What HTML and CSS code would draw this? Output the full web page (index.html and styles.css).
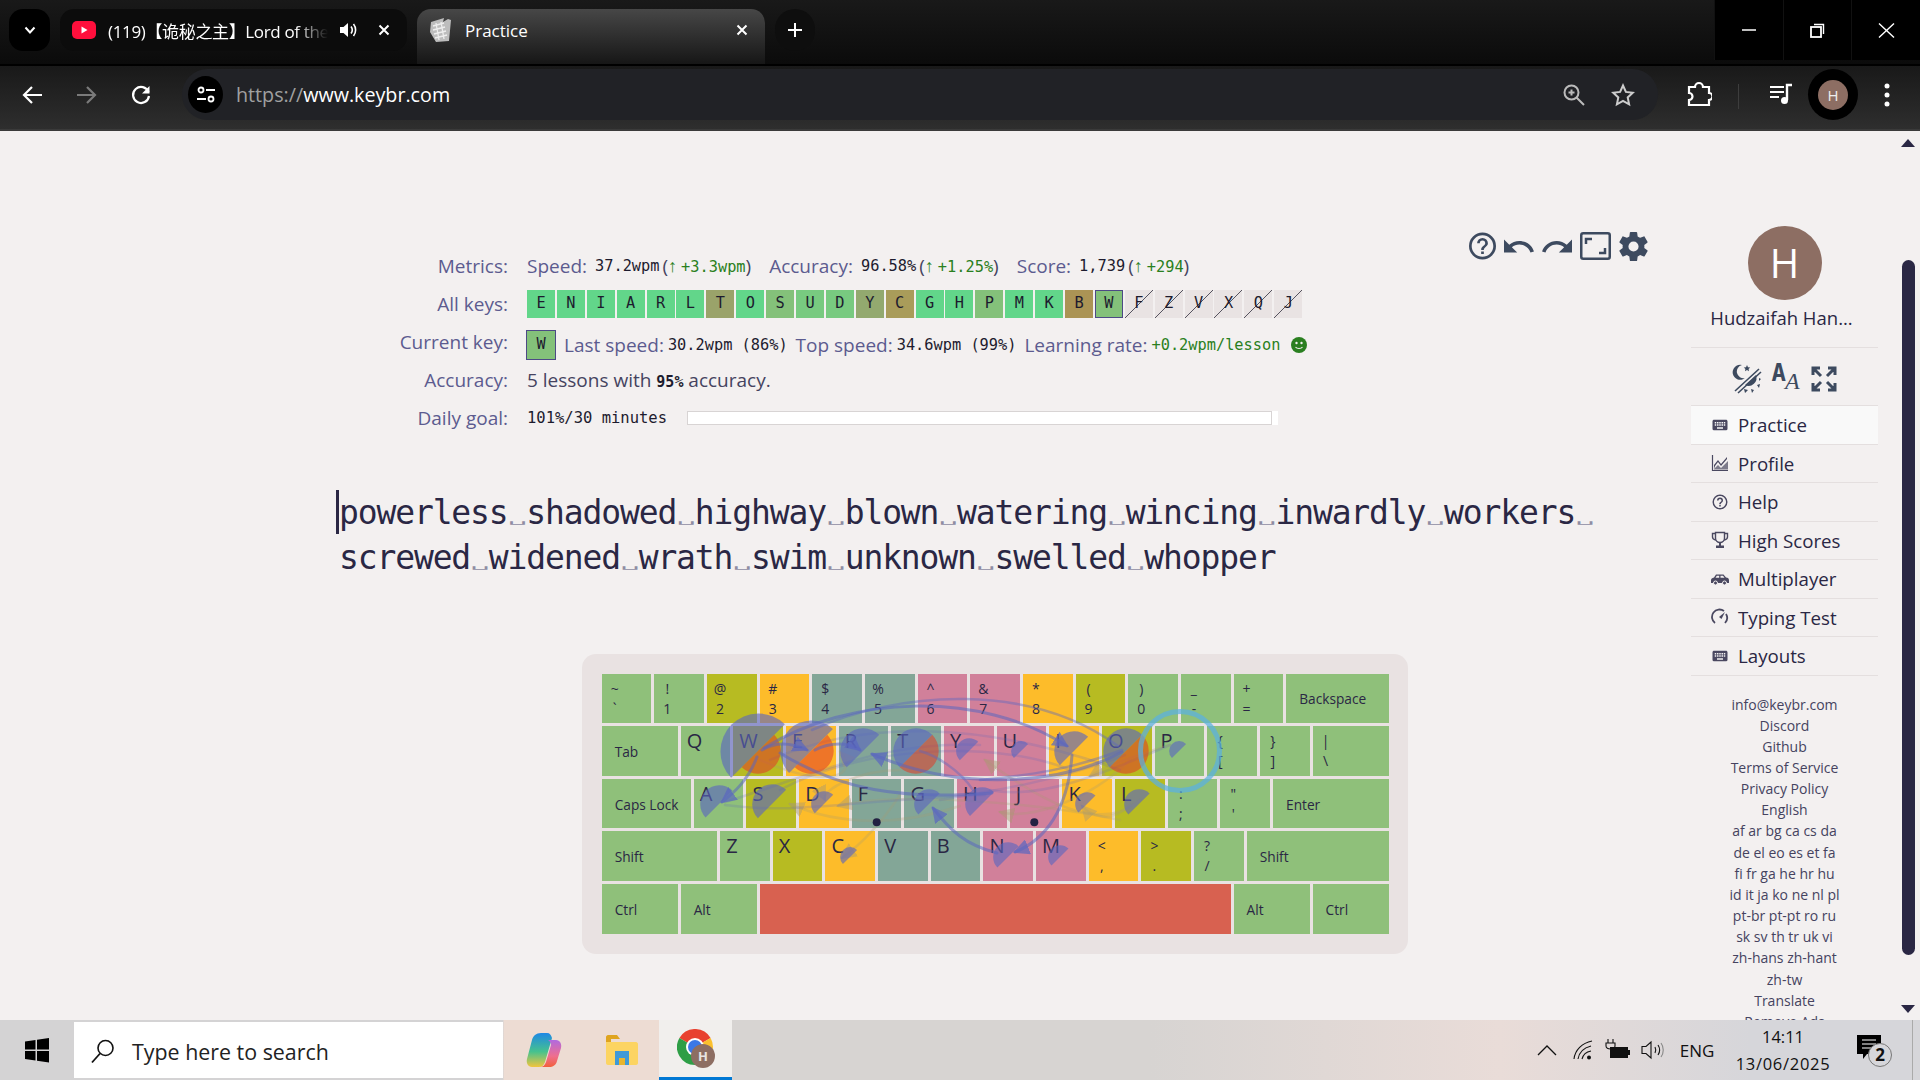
FILE: index.html
```html
<!DOCTYPE html>
<html lang="en">
  <head>
    <meta charset="UTF-8" />
    <title>Practice</title>
    <link rel="stylesheet" href="styles.css">
  </head>
  <body>
    <!-- browser tabs -->
    <div class="tabstrip">
      <div class="tab-menu">
        <svg width="14" height="14" viewBox="0 0 14 14"><path d="M2.500 4.500 7 9.500l4.500-5" fill="none" stroke="#fff" stroke-width="2"/></svg>
      </div>
      <div class="tab tab-yt">
        <svg class="tab-icon" width="24" height="18" viewBox="0 0 24 18"><rect width="24" height="18" rx="5" fill="#ff0f3c"/><path d="M9.500 5.500 15.500 9l-6 3.500z" fill="#fff"/></svg>
        <span class="tab-title tab-title-fade">(119)【诡秘之主】Lord of the Mysteries</span>
        <svg class="tab-sound" width="20" height="20" viewBox="0 0 20 20"><path d="M2 7h3.500L10 3v14l-4.500-4H2z" fill="#fff"/><path d="M13 6.500c1.500 2 1.500 5 0 7M15.500 4c2.800 3.500 2.800 8.500 0 12" fill="none" stroke="#fff" stroke-width="1.600"/></svg>
        <svg class="tab-close" width="12" height="12" viewBox="0 0 12 12"><path d="M1.500 1.500l9 9M10.500 1.500l-9 9" stroke="#fff" stroke-width="2"/></svg>
      </div>
      <div class="tab tab-active">
        <svg class="tab-icon" width="24" height="24" viewBox="0 0 24 24"><path d="M2 4 15 0l-1 4 5-3 3 1-2 21-13 1L1 14z" fill="#bdbdbd"/><path d="M4 8l11-3M4 12l12-3M5 16l12-3M6 20l12-3M7 5l3 17M12 4l3 17" stroke="#eee" stroke-width="1.300"/></svg>
        <span class="tab-title">Practice</span>
        <svg class="tab-close" width="12" height="12" viewBox="0 0 12 12"><path d="M1.500 1.500l9 9M10.500 1.500l-9 9" stroke="#fff" stroke-width="2"/></svg>
      </div>
      <div class="tab-new">
        <svg width="16" height="16" viewBox="0 0 16 16"><path d="M8 1v14M1 8h14" stroke="#fff" stroke-width="2"/></svg>
      </div>
      <div class="window-btns">
        <div class="window-btn"><svg width="14" height="14" viewBox="0 0 14 14"><path d="M0 7h14" stroke="#fff" stroke-width="1.500"/></svg></div>
        <div class="window-btn"><svg width="15" height="15" viewBox="0 0 15 15"><rect x="1" y="4" width="10" height="10" fill="none" stroke="#fff" stroke-width="1.800"/><path d="M4 1.500h9.500V11" fill="none" stroke="#fff" stroke-width="1.400"/></svg></div>
        <div class="window-btn"><svg width="17" height="15" viewBox="0 0 17 15"><path d="M1 0.500l15 14M16 0.500 1 14.500" stroke="#fff" stroke-width="1.400"/></svg></div>
      </div>
    </div>

    <!-- address bar -->
    <div class="toolbar">
      <svg class="nav-btn" width="22" height="22" viewBox="0 0 22 22"><path d="M20 11H3M10 3l-8 8 8 8" fill="none" stroke="#fff" stroke-width="2.200"/></svg>
      <svg class="nav-btn nav-off" width="22" height="22" viewBox="0 0 22 22"><path d="M2 11h17M12 3l8 8-8 8" fill="none" stroke="#7a7a7a" stroke-width="2.200"/></svg>
      <svg class="nav-btn" width="22" height="22" viewBox="0 0 22 22"><path d="M18.500 8A8 8 0 1 0 19 12" fill="none" stroke="#fff" stroke-width="2.200"/><path d="M19.500 2v7.500H12z" fill="#fff"/></svg>
      <div class="omnibox">
        <div class="site-info">
          <svg width="20" height="20" viewBox="0 0 20 20"><circle cx="5" cy="5" r="2.500" fill="none" stroke="#fff" stroke-width="1.800"/><path d="M10 5h9M1 14h9" stroke="#fff" stroke-width="1.800"/><circle cx="15" cy="14" r="2.500" fill="none" stroke="#fff" stroke-width="1.800"/></svg>
        </div>
        <div class="url"><span class="url-dim">https://</span>www.keybr.com</div>
        <svg class="omni-icon" width="24" height="24" viewBox="0 0 24 24"><circle cx="9.500" cy="9.500" r="7" fill="none" stroke="#bbb" stroke-width="2"/><path d="M14.500 14.500 22 22M9.500 6.500v6M6.500 9.500h6" stroke="#bbb" stroke-width="2"/></svg>
        <svg class="omni-icon" width="24" height="24" viewBox="0 0 24 24"><path d="M12 2.500l2.900 6.400 6.900.8-5.100 4.700 1.400 6.900-6.100-3.500-6.100 3.500 1.400-6.900L2.200 9.700l6.900-.8z" fill="none" stroke="#ccc" stroke-width="2"/></svg>
      </div>
      <svg class="tool-icon tool-ext" width="26" height="26" viewBox="0 0 26 26"><path d="M3 6h6a4 4 0 0 1 8 0h6v6a3.500 3.500 0 0 1 0 7v5H3v-5a3.500 3.500 0 0 0 0-7z" fill="none" stroke="#fff" stroke-width="2.200"/></svg>
      <div class="tool-sep"></div>
      <svg class="tool-icon tool-media" width="24" height="22" viewBox="0 0 24 22"><path d="M1 4h14M1 9h14M1 14h9" stroke="#fff" stroke-width="2.200"/><path d="M18 17V2h5" fill="none" stroke="#fff" stroke-width="2.400"/><circle cx="15.500" cy="17.500" r="3.500" fill="#fff"/></svg>
      <div class="profile-btn"><div class="profile-pic">H</div></div>
      <svg class="tool-icon tool-menu" width="6" height="24" viewBox="0 0 6 24"><circle cx="3" cy="3" r="2.500" fill="#fff"/><circle cx="3" cy="12" r="2.500" fill="#fff"/><circle cx="3" cy="21" r="2.500" fill="#fff"/></svg>
    </div>

    <div class="page">
      <div class="main">
        <div class="top">
          <div class="stats">
            <div class="stat-label">Metrics:</div>
            <div class="stat-value">
              <span class="lbl">Speed:</span> <span class="val val-first">37.2wpm</span><span class="par">(</span><span class="up"><b class="arrow">↑</b>+3.3wpm</span><span class="par">)</span>
              <span class="lbl lbl-gap">Accuracy:</span> <span class="val val-first">96.58%</span><span class="par">(</span><span class="up"><b class="arrow">↑</b>+1.25%</span><span class="par">)</span>
              <span class="lbl lbl-gap">Score:</span> <span class="val val-first">1,739</span><span class="par">(</span><span class="up"><b class="arrow">↑</b>+294</span><span class="par">)</span>
            </div>

            <div class="stat-label">All keys:</div>
            <div class="stat-value tiles">
              <span class="tile t-good">E</span><span class="tile t-good">N</span><span class="tile t-good">I</span><span class="tile t-good">A</span><span class="tile t-good">R</span><span class="tile t-good">L</span><span class="tile t-t">T</span><span class="tile t-good">O</span><span class="tile t-s">S</span><span class="tile t-u">U</span><span class="tile t-u">D</span><span class="tile t-y">Y</span><span class="tile t-c">C</span><span class="tile t-good">G</span><span class="tile t-good">H</span><span class="tile t-s">P</span><span class="tile t-good">M</span><span class="tile t-good">K</span><span class="tile t-b">B</span><span class="tile t-s t-cur">W</span><span class="tile t-off">F</span><span class="tile t-off">Z</span><span class="tile t-off">V</span><span class="tile t-off">X</span><span class="tile t-off">Q</span><span class="tile t-off">J</span>
            </div>

            <div class="stat-label">Current key:</div>
            <div class="stat-value stat-cur">
              <span class="tile t-s t-cur t-big">W</span>
              <span class="lbl">Last speed:</span> <span class="val">30.2wpm (86%)</span>
              <span class="lbl">Top speed:</span> <span class="val">34.6wpm (99%)</span>
              <span class="lbl">Learning rate:</span> <span class="val up">+0.2wpm/lesson</span>
              <svg class="smile" width="16" height="16" viewBox="0 0 16 16"><circle cx="8" cy="8" r="8" fill="#2a7f20"/><circle cx="5.500" cy="6" r="1.200" fill="#f3f0f0"/><circle cx="10.500" cy="6" r="1.200" fill="#f3f0f0"/><path d="M4.500 10c1.500 2 5.500 2 7 0" fill="none" stroke="#f3f0f0" stroke-width="1.200"/></svg>
            </div>

            <div class="stat-label">Accuracy:</div>
            <div class="stat-value plain">5 lessons with <span class="val val-bold">95%</span> accuracy.</div>

            <div class="stat-label">Daily goal:</div>
            <div class="stat-value">
              <span class="val val-goal">101%/30 minutes</span>
              <div class="goal-bar"><div class="goal-inner"></div></div>
            </div>
          </div>

          <div class="tools">
            <svg class="tool-help" viewBox="2 2 20 20"><path d="M11,18H13V16H11V18M12,2A10,10 0 0,0 2,12A10,10 0 0,0 12,22A10,10 0 0,0 22,12A10,10 0 0,0 12,2M12,20C7.59,20 4,16.41 4,12C4,7.59 7.59,4 12,4C16.41,4 20,7.59 20,12C20,16.41 16.41,20 12,20M12,6A4,4 0 0,0 8,10H10A2,2 0 0,1 12,8A2,2 0 0,1 14,10C14,12 11,11.75 11,15H13C13,12.75 16,12.5 16,10A4,4 0 0,0 12,6Z"/></svg>
            <svg class="tool-undo" viewBox="2 7 20.500 9"><path d="M12.5,8C9.85,8 7.45,9 5.6,10.6L2,7V16H11L7.38,12.38C8.77,11.22 10.54,10.5 12.5,10.5C16.04,10.5 19.05,12.81 20.1,16L22.47,15.22C21.08,11.03 17.15,8 12.5,8Z"/></svg>
            <svg class="tool-undo" viewBox="1.500 7 20.500 9"><path d="M18.4,10.6C16.55,9 14.15,8 11.5,8C6.85,8 2.92,11.03 1.54,15.22L3.9,16C4.95,12.81 7.95,10.5 11.5,10.5C13.45,10.5 15.23,11.22 16.62,12.38L13,16H22V7L18.4,10.6Z"/></svg>
            <svg class="tool-box" viewBox="0 0 31 28"><rect x="1.250" y="1.250" width="28.500" height="25.500" rx="2" fill="none" stroke="#3d4a5f" stroke-width="2.500"/><path d="M6 12V7h6M25 16v5h-6" fill="none" stroke="#3d4a5f" stroke-width="2.500"/></svg>
            <svg class="tool-gear" viewBox="2 2 20 20"><path d="M12,15.5A3.5,3.5 0 0,1 8.5,12A3.5,3.5 0 0,1 12,8.5A3.5,3.5 0 0,1 15.5,12A3.5,3.5 0 0,1 12,15.5M19.43,12.97C19.47,12.65 19.5,12.33 19.5,12C19.5,11.67 19.47,11.34 19.43,11L21.54,9.37C21.73,9.22 21.78,8.95 21.66,8.73L19.66,5.27C19.54,5.05 19.27,4.96 19.05,5.05L16.56,6.05C16.04,5.66 15.5,5.32 14.87,5.07L14.5,2.42C14.46,2.18 14.25,2 14,2H10C9.75,2 9.54,2.18 9.5,2.42L9.13,5.07C8.5,5.32 7.96,5.66 7.44,6.05L4.95,5.05C4.73,4.96 4.46,5.05 4.34,5.27L2.34,8.73C2.21,8.95 2.27,9.22 2.46,9.37L4.57,11C4.53,11.34 4.5,11.67 4.5,12C4.5,12.33 4.53,12.65 4.57,12.97L2.46,14.63C2.27,14.78 2.21,15.05 2.34,15.27L4.34,18.73C4.46,18.95 4.73,19.03 4.95,18.95L7.44,17.94C7.96,18.34 8.5,18.68 9.13,18.93L9.5,21.58C9.54,21.82 9.75,22 10,22H14C14.25,22 14.46,21.82 14.5,21.58L14.87,18.93C15.5,18.67 16.04,18.34 16.56,17.94L19.05,18.95C19.27,19.03 19.54,18.95 19.66,18.73L21.66,15.27C21.78,15.05 21.73,14.78 21.54,14.63L19.43,12.97Z"/></svg>
          </div>
        </div>

        <div class="lesson">
          <div class="lesson-line"><span class="caret"></span>powerless<i>␣</i>shadowed<i>␣</i>highway<i>␣</i>blown<i>␣</i>watering<i>␣</i>wincing<i>␣</i>inwardly<i>␣</i>workers<i>␣</i></div>
          <div class="lesson-line">screwed<i>␣</i>widened<i>␣</i>wrath<i>␣</i>swim<i>␣</i>unknown<i>␣</i>swelled<i>␣</i>whopper</div>
        </div>

        <div class="keyboard">
          <div class="kb-row">
            <div class="key green sym"><span>~</span><span>`</span></div>
            <div class="key green sym"><span>!</span><span>1</span></div>
            <div class="key olive sym"><span>@</span><span>2</span></div>
            <div class="key yellow sym"><span>#</span><span>3</span></div>
            <div class="key teal sym"><span>$</span><span>4</span></div>
            <div class="key teal sym"><span>%</span><span>5</span></div>
            <div class="key pink sym"><span>^</span><span>6</span></div>
            <div class="key pink sym"><span>&amp;</span><span>7</span></div>
            <div class="key yellow sym"><span>*</span><span>8</span></div>
            <div class="key olive sym"><span>(</span><span>9</span></div>
            <div class="key green sym"><span>)</span><span>0</span></div>
            <div class="key green sym"><span>_</span><span>-</span></div>
            <div class="key green sym"><span>+</span><span>=</span></div>
            <div class="key green label w2">Backspace</div>
          </div>
          <div class="kb-row">
            <div class="key green label w15">Tab</div>
            <div class="key green letter">Q</div>
            <div class="key olive letter">W</div>
            <div class="key yellow letter">E</div>
            <div class="key teal letter">R</div>
            <div class="key teal letter">T</div>
            <div class="key pink letter">Y</div>
            <div class="key pink letter">U</div>
            <div class="key yellow letter">I</div>
            <div class="key olive letter">O</div>
            <div class="key green letter">P</div>
            <div class="key green sym"><span>{</span><span>[</span></div>
            <div class="key green sym"><span>}</span><span>]</span></div>
            <div class="key green sym w15"><span>|</span><span>\</span></div>
          </div>
          <div class="kb-row">
            <div class="key green label w175">Caps Lock</div>
            <div class="key green letter">A</div>
            <div class="key olive letter">S</div>
            <div class="key yellow letter">D</div>
            <div class="key teal letter">F</div>
            <div class="key teal letter">G</div>
            <div class="key pink letter">H</div>
            <div class="key pink letter">J</div>
            <div class="key yellow letter">K</div>
            <div class="key olive letter">L</div>
            <div class="key green sym"><span>:</span><span>;</span></div>
            <div class="key green sym"><span>"</span><span>'</span></div>
            <div class="key green label w225">Enter</div>
          </div>
          <div class="kb-row">
            <div class="key green label w225">Shift</div>
            <div class="key green letter">Z</div>
            <div class="key olive letter">X</div>
            <div class="key yellow letter">C</div>
            <div class="key teal letter">V</div>
            <div class="key teal letter">B</div>
            <div class="key pink letter">N</div>
            <div class="key pink letter">M</div>
            <div class="key yellow sym"><span>&lt;</span><span>,</span></div>
            <div class="key olive sym"><span>&gt;</span><span>.</span></div>
            <div class="key green sym"><span>?</span><span>/</span></div>
            <div class="key green label w275">Shift</div>
          </div>
          <div class="kb-row">
            <div class="key green label w15">Ctrl</div>
            <div class="key green label w15">Alt</div>
            <div class="key space w9"></div>
            <div class="key green label w15">Alt</div>
            <div class="key green label w15">Ctrl</div>
          </div>

          <!-- heat map drawn over the keys, coordinates are page pixels -->
          <svg class="kb-overlay" width="826" height="300" viewBox="582 654 826 300">
            <defs>
              <path id="half-up" d="M-.707 .707A1 1 0 0 1 .707-.707Z"/>
              <path id="half-down" d="M.707-.707A1 1 0 0 1-.707 .707Z"/>
              <marker id="head-blue" markerUnits="userSpaceOnUse" markerWidth="18" markerHeight="16" refX="14" refY="8" orient="auto"><path d="M0 0 16 8 0 16Z" fill="#5a66c0" fill-opacity=".7"/></marker>
              <marker id="head-amber" markerUnits="userSpaceOnUse" markerWidth="18" markerHeight="16" refX="14" refY="8" orient="auto"><path d="M0 0 16 8 0 16Z" fill="#a89a70" fill-opacity=".45"/></marker>
            </defs>

            <g class="curve-faint">
              <path d="M1130 760C1090 800 1030 820 1000 812" marker-end="url(#head-amber)"/>
              <path d="M960 806C900 826 840 826 790 804" marker-end="url(#head-amber)"/>
              <path d="M1120 820C1050 805 900 790 838 806" marker-end="url(#head-amber)"/>
              <path d="M900 795C880 825 860 845 842 858" marker-end="url(#head-amber)"/>
              <path d="M1140 800C1100 835 1040 800 985 760" marker-end="url(#head-amber)"/>
              <path d="M1130 805C1110 825 1090 815 1082 806" marker-end="url(#head-amber)"/>
              <path d="M900 770C860 770 820 790 825 800" marker-end="url(#head-amber)"/>
              <path d="M1170 745C1120 760 1100 770 1090 776" marker-end="url(#head-amber)"/>
              <path d="M760 760C830 790 860 775 840 752" marker-end="url(#head-amber)"/>
            </g>
            <g class="curve-soft">
              <path d="M770 760C860 720 980 720 1120 770"/>
              <path d="M725 802C800 780 880 740 980 745"/>
              <path d="M780 790C860 745 1000 740 1070 770"/>
              <path d="M725 805C800 815 850 800 985 795"/>
              <path d="M990 790C1040 800 1100 775 1170 745"/>
              <path d="M940 800C1000 790 1060 780 1125 755"/>
            </g>

            <g class="wedge">
              <use href="#half-up" transform="translate(758 751) scale(38)"/>
              <use href="#half-up" transform="translate(811 751) scale(31)"/>
              <use href="#half-up" transform="translate(863 751) scale(23)"/>
              <use href="#half-up" transform="translate(916 751) scale(23)"/>
              <use href="#half-up" transform="translate(969 751) scale(13)"/>
              <use href="#half-up" transform="translate(1021 751) scale(10)"/>
              <use href="#half-up" transform="translate(1074 751) scale(20)"/>
              <use href="#half-up" transform="translate(1126 751) scale(23)"/>
              <use href="#half-up" transform="translate(1179 751) scale(10)"/>
              <use href="#half-up" transform="translate(719 804) scale(19)"/>
              <use href="#half-up" transform="translate(772 804) scale(20)"/>
              <use href="#half-up" transform="translate(824 804) scale(13)"/>
              <use href="#half-up" transform="translate(929 804) scale(15)"/>
              <use href="#half-up" transform="translate(982 804) scale(17)"/>
              <use href="#half-up" transform="translate(1087 804) scale(12)"/>
              <use href="#half-up" transform="translate(1139 804) scale(15)"/>
              <use href="#half-up" transform="translate(850 857) scale(10)"/>
              <use href="#half-up" transform="translate(1008 857) scale(15)"/>
              <use href="#half-up" transform="translate(1060 857) scale(12)"/>
            </g>
            <g class="wedge-red">
              <use href="#half-down" transform="translate(758 751) scale(23)"/>
              <use href="#half-down" transform="translate(811 751) scale(23)"/>
              <use href="#half-down" transform="translate(916 751) scale(23)"/>
              <use href="#half-down" transform="translate(1126 751) scale(23)"/>
            </g>

            <g class="curve">
              <path d="M764 748C850 695 980 690 1067 746" marker-end="url(#head-blue)"/>
              <path d="M812 730C900 690 1030 682 1118 746" class="curve-thin"/>
              <path d="M1122 752C1060 785 960 792 872 754" marker-end="url(#head-blue)"/>
              <path d="M780 753C840 790 900 800 992 793"/>
              <path d="M973 790C960 770 935 755 920 751" class="curve-thin"/>
              <path d="M997 853C965 845 950 830 933 808" marker-end="url(#head-blue)"/>
              <path d="M1072 755C1068 810 1045 840 1015 852" marker-end="url(#head-blue)"/>
              <path d="M762 750C775 742 790 742 807 750" marker-end="url(#head-blue)"/>
              <path d="M815 750C830 742 850 742 860 750" marker-end="url(#head-blue)"/>
              <path d="M757 757C748 780 735 792 722 802" marker-end="url(#head-blue)"/>
              <path d="M1122 750C1070 770 1030 775 980 780" class="curve-thin"/>
            </g>

            <circle class="ring" cx="1180" cy="751" r="39.500"/>
            <circle class="home-dot" cx="876.700" cy="822.300" r="4"/>
            <circle class="home-dot" cx="1034.300" cy="822.300" r="4"/>
          </svg>
        </div>
      </div>

      <div class="sidebar">
        <div class="avatar">H</div>
        <div class="user-name">Hudzaifah Han...</div>
        <div class="side-tools">
          <svg width="30" height="30" viewBox="0 0 30 30"><path d="M3 27 27 5M6 29 29 8" stroke="#3d4a5f" stroke-width="1.600"/><path d="M10 1a7.500 7.500 0 1 0 3 13 6.500 6.500 0 0 1-3-13z" fill="#3d4a5f"/><path d="M15 1l1 2.200 2.200.3-1.600 1.500.4 2.200-2-1.100-2 1.100.4-2.200-1.600-1.500 2.200-.3z" fill="#3d4a5f"/><path d="M13 21 24 11a8 8 0 0 1-11 10z" fill="#3d4a5f"/><path d="M12 25l4 1-3 3zM19 25l3 1-2 3zM25 21l3-1-1 4zM27 14l2 1-2 2z" fill="#3d4a5f"/></svg>
          <div class="side-aa"><span class="aa-bold">A</span><span class="aa-italic">A</span></div>
          <svg width="28" height="28" viewBox="0 0 28 28"><path d="M3 10V3h7M3 3l8 8M25 10V3h-7M25 3l-8 8M3 18v7h7M3 25l8-8M25 18v7h-7M25 25l-8-8" fill="none" stroke="#3d4a5f" stroke-width="3"/></svg>
        </div>
        <div class="side-nav">
          <a class="side-link side-link-on">
            <svg width="18" height="18" viewBox="0 0 24 24"><path d="M19,10H17V8H19M19,13H17V11H19M16,10H14V8H16M16,13H14V11H16M16,17H8V15H16M7,10H5V8H7M7,13H5V11H7M8,11H10V13H8M8,8H10V10H8M11,11H13V13H11M11,8H13V10H11M20,5H4C2.89,5 2,5.89 2,7V17A2,2 0 0,0 4,19H20A2,2 0 0,0 22,17V7C22,5.89 21.1,5 20,5Z"/></svg>
            Practice
          </a>
          <a class="side-link">
            <svg width="18" height="18" viewBox="0 0 18 18"><path d="M1.500 1v15.500H17" fill="none" stroke="#4a4860" stroke-width="1.200"/><path d="M3 15v-4l4-5 3 4 6-7v2l-6 7-3-4-3 4z"/><path d="M3 15l4-4 3 3 7-7v8.500H3z" fill-opacity=".7"/></svg>
            Profile
          </a>
          <a class="side-link">
            <svg width="18" height="18" viewBox="0 0 24 24"><path d="M11,18H13V16H11V18M12,2A10,10 0 0,0 2,12A10,10 0 0,0 12,22A10,10 0 0,0 22,12A10,10 0 0,0 12,2M12,20C7.59,20 4,16.41 4,12C4,7.59 7.59,4 12,4C16.41,4 20,7.59 20,12C20,16.41 16.41,20 12,20M12,6A4,4 0 0,0 8,10H10A2,2 0 0,1 12,8A2,2 0 0,1 14,10C14,12 11,11.75 11,15H13C13,12.75 16,12.5 16,10A4,4 0 0,0 12,6Z"/></svg>
            Help
          </a>
          <a class="side-link">
            <svg width="18" height="18" viewBox="0 0 18 18"><path d="M4.500 1.500h9V7a4.500 4.500 0 0 1-9 0zM4.500 2.500H1.500V6c0 1.500 1 2.500 3 3M13.500 2.500h3V6c0 1.500-1 2.500-3 3" fill="none" stroke="#4a4860" stroke-width="1.400"/><path d="M8 11.500h2v3h3V17H5v-2.500h3z"/></svg>
            High Scores
          </a>
          <a class="side-link">
            <svg width="18" height="18" viewBox="0 0 18 18"><path d="M0 10.500C0 8.500 1 8 3 7.500L5 4.500h7.500l2.500 3c2 .3 3 1 3 3V13H0z"/><path d="M5.800 5.800h2.400v2H4.500zM9.500 5.800H12l1.500 2h-4z" fill="#f3f0f0"/><circle cx="4.500" cy="13" r="2" stroke="#f3f0f0"/><circle cx="13.500" cy="13" r="2" stroke="#f3f0f0"/></svg>
            Multiplayer
          </a>
          <a class="side-link">
            <svg width="18" height="18" viewBox="0 0 18 18"><path d="M4 15A7.500 7.500 0 0 1 13 3M15 6a7.500 7.500 0 0 1-1 9" fill="none" stroke="#4a4860" stroke-width="1.800"/><path d="M8 9l6-5-3.500 7z"/></svg>
            Typing Test
          </a>
          <a class="side-link">
            <svg width="18" height="18" viewBox="0 0 24 24"><path d="M19,10H17V8H19M19,13H17V11H19M16,10H14V8H16M16,13H14V11H16M16,17H8V15H16M7,10H5V8H7M7,13H5V11H7M8,11H10V13H8M8,8H10V10H8M11,11H13V13H11M11,8H13V10H11M20,5H4C2.89,5 2,5.89 2,7V17A2,2 0 0,0 4,19H20A2,2 0 0,0 22,17V7C22,5.89 21.1,5 20,5Z"/></svg>
            Layouts
          </a>
        </div>
        <div class="side-links">
          <a>info@keybr.com</a>
          <a>Discord</a>
          <a>Github</a>
          <a>Terms of Service</a>
          <a>Privacy Policy</a>
          <a>English</a>
          <a>af ar bg ca cs da</a>
          <a>de el eo es et fa</a>
          <a>fi fr ga he hr hu</a>
          <a>id it ja ko ne nl pl</a>
          <a>pt-br pt-pt ro ru</a>
          <a>sk sv th tr uk vi</a>
          <a>zh-hans zh-hant</a>
          <a>zh-tw</a>
          <a>Translate</a>
          <a>Remove Ads</a>
        </div>
      </div>

      <div class="scrollbar">
        <div class="scroll-up"></div>
        <div class="scroll-thumb"></div>
        <div class="scroll-down"></div>
      </div>
    </div>

    <!-- windows taskbar -->
    <div class="taskbar">
      <div class="start">
        <svg width="26" height="26" viewBox="0 0 26 26"><path d="M1 4.500 11.500 3v9.500H1zM13 2.800 25 1v11.500H13zM1 14h10.500v9.500L1 22zM13 14h12v11.500L13 23.700z" fill="#000"/></svg>
      </div>
      <div class="search">
        <svg width="26" height="26" viewBox="0 0 26 26"><circle cx="15.500" cy="10" r="7.500" fill="none" stroke="#111" stroke-width="1.600"/><path d="M10 15.500 2 24.500" stroke="#111" stroke-width="1.800"/></svg>
        <span>Type here to search</span>
      </div>
      <div class="task-app task-copilot">
        <svg width="36" height="36" viewBox="0 0 36 36">
          <defs>
            <linearGradient id="cop-a" x1="0" y1="0" x2="0" y2="1"><stop offset="0" stop-color="#1e88e5"/><stop offset=".55" stop-color="#46c28e"/><stop offset="1" stop-color="#f2c53d"/></linearGradient>
            <linearGradient id="cop-b" x1="0" y1="0" x2="0" y2="1"><stop offset="0" stop-color="#b06ae0"/><stop offset=".6" stop-color="#ef6f8e"/><stop offset="1" stop-color="#f2603c"/></linearGradient>
          </defs>
          <path d="M15 1h6c3 0 4 2 5 5l-7 24c-1 3-3 5-6 5H6c-4 0-6-4-5-8l5-19c1-4 4-7 9-7z" fill="url(#cop-a)"/>
          <path d="M22 8h8c4 0 6 4 5 8l-4 13c-1 4-4 6-8 6h-9c3 0 5-2 6-5l5-17c0-2-1-4-3-5z" fill="url(#cop-b)"/>
        </svg>
      </div>
      <div class="task-app task-folder">
        <svg width="34" height="30" viewBox="0 0 34 30"><path d="M1 2c0-1 1-2 2-2h9l3 4h-9v3H1z" fill="#dfa41f"/><path d="M1 7h30c1 0 2 1 2 2v19c0 1-1 2-2 2H3c-1 0-2-1-2-2z" fill="#fcd462"/><path d="M10 16h14v14h-4v-7h-6v7h-4z" fill="#3f9ad8"/><rect x="14" y="23" width="6" height="7" fill="#e8b52e"/></svg>
      </div>
      <div class="task-app task-app-on">
        <svg width="38" height="40" viewBox="0 0 38 40">
          <path d="M18 18 2.400 9A18 18 0 0 1 33.600 9z" fill="#e8412f"/>
          <path d="M18 18h18A18 18 0 0 1 18 36z" fill="#fbc02d"/>
          <path d="M18 18v18A18 18 0 0 1 2.400 9z" fill="#2e9e46"/>
          <path d="M18 18 33.600 9A18 18 0 0 1 36 18z" fill="#fbc02d"/>
          <circle cx="18" cy="18" r="9" fill="#fff"/>
          <circle cx="18" cy="18" r="7" fill="#3b78e7"/>
          <circle cx="26" cy="27" r="12" fill="#8d6e63"/>
          <text x="26" y="32" class="chrome-h">H</text>
        </svg>
      </div>
      <div class="task-gap"></div>
      <div class="tray-icon">
        <svg width="20" height="12" viewBox="0 0 20 12"><path d="M1 11 10 2l9 9" fill="none" stroke="#111" stroke-width="1.300"/></svg>
      </div>
      <div class="tray-icon tray-wifi">
        <svg width="22" height="20" viewBox="0 0 22 20"><path d="M1 19C2 10 9 3 19 1M5 19C6 13 10 8 18 6M9 19c1-4 4-7 9-8" fill="none" stroke="#111" stroke-width="1.100"/><circle cx="16" cy="17.500" r="2" fill="#111"/></svg>
      </div>
      <div class="tray-icon">
        <svg width="26" height="22" viewBox="0 0 26 22"><path d="M3 0v4M8 0v4M1 4h9v3c0 2-2 3-4.500 3S1 9 1 7z" fill="none" stroke="#111" stroke-width="1.100"/><rect x="5" y="8" width="18" height="11" fill="#111"/><rect x="23" y="11" width="2" height="5" fill="#111"/></svg>
      </div>
      <div class="tray-icon">
        <svg width="24" height="20" viewBox="0 0 24 20"><path d="M1 6.500h4L10 2v16l-5-4.500H1z" fill="none" stroke="#111" stroke-width="1.100"/><path d="M14 7c1 2 1 4 0 6M17 5c2 3 2 7 0 10" fill="none" stroke="#111" stroke-width="1.100"/><path d="M20 3c3 4 3 10 0 14" fill="none" stroke="#888" stroke-width="1.100"/></svg>
      </div>
      <div class="tray-lang">ENG</div>
      <div class="tray-clock"><div>14:11</div><div class="tray-date">13/06/2025</div></div>
      <div class="tray-notify">
        <svg width="38" height="38" viewBox="0 0 38 38"><path d="M2 4h24v19H12l-4 5v-5H2z" fill="#000"/><path d="M7 9h14M7 13h14M7 17h10" stroke="#fff" stroke-width="1.200"/><circle cx="25" cy="24" r="11.500" fill="#d6d6da" stroke="#777" stroke-width="1"/><text x="25" y="30" class="notify-num">2</text></svg>
      </div>
      <div class="show-desktop"></div>
    </div>
  </body>
</html>
```

FILE: styles.css
```css
* {
  box-sizing: border-box;
}

body {
  margin: 0;
  width: 1920px;
  height: 1080px;
  overflow: hidden;
  display: flex;
  flex-direction: column;
  font-family: "Open Sans", sans-serif;
  background: #f3f0f0;
}

svg {
  display: block;
  flex: none;
}

/* browser chrome */
.tabstrip {
  height: 66px;
  flex: none;
  display: flex;
  align-items: flex-start;
  gap: 10px;
  padding: 9px 0 0 9px;
  color: #fff;
  background: linear-gradient(#191919, #0b0b0b);
  border-bottom: 2px solid #000;
}

.tab-menu {
  width: 41px;
  height: 42px;
  display: flex;
  align-items: center;
  justify-content: center;
  background: #000;
  border-radius: 14px;
}

.tab {
  width: 347px;
  display: flex;
  align-items: center;
  padding-left: 12px;
  font-size: 17px;
}

.tab-yt {
  height: 42px;
  background: #0c0c0c;
  border-radius: 14px;
}

.tab-active {
  width: 348px;
  height: 55px;
  padding-bottom: 13px;
  background: linear-gradient(#474747, #161616);
  border-radius: 14px 14px 0 0;
}

.tab-title {
  margin-left: 12px;
  white-space: nowrap;
  overflow: hidden;
  font-family: "Open Sans", "Noto Sans CJK SC", sans-serif;
}

.tab-title-fade {
  width: 220px;
  letter-spacing: -0.350px;
  -webkit-mask-image: linear-gradient(to right, #000 85%, transparent);
  mask-image: linear-gradient(to right, #000 85%, transparent);
}

.tab-sound {
  margin-left: 10px;
}

.tab-yt .tab-close {
  margin-left: 20px;
}

.tab-active .tab-close {
  margin-left: 208px;
}

.tab-new {
  width: 40px;
  height: 42px;
  display: flex;
  align-items: center;
  justify-content: center;
  background: #0e0e0e;
  border-radius: 20px;
}

.window-btns {
  margin: -9px 0 0 auto;
  height: 60px;
  display: flex;
  background: #000;
}

.window-btn {
  width: 68.700px;
  display: flex;
  align-items: center;
  justify-content: center;
  border-left: 1px solid #111;
}

.toolbar {
  height: 65px;
  flex: none;
  display: flex;
  align-items: flex-start;
  padding-top: 3px;
  background: linear-gradient(#191919, #2e2e2e);
  border-bottom: 2px solid #3a3a3a;
}

.nav-btn {
  margin: 15px 0 0 22px;
}

.nav-off {
  margin-left: 31px;
}

.nav-btn + .nav-btn + .nav-btn {
  margin-left: 33px;
}

.omnibox {
  margin-left: 30px;
  width: 1476px;
  height: 51px;
  display: flex;
  align-items: center;
  padding: 0 23px 0 6px;
  background: #212226;
  border-radius: 26px;
}

.site-info {
  width: 35px;
  height: 37px;
  display: flex;
  align-items: center;
  justify-content: center;
  background: #000;
  border-radius: 50%;
}

.url {
  margin-left: 13px;
  flex: 1;
  font-size: 19.700px;
  color: #fff;
}

.url-dim {
  color: #a0a0a0;
}

.omni-icon {
  margin-left: 25px;
}

.tool-icon {
  margin-top: 12px;
}

.tool-ext {
  margin-left: 28px;
}

.tool-sep {
  width: 1px;
  height: 25px;
  margin: 15px 0 0 26px;
  background: #3d3d3d;
}

.tool-media {
  margin: 14px 0 0 30px;
}

.profile-btn {
  margin-left: 15px;
  width: 50px;
  height: 51px;
  display: flex;
  align-items: center;
  justify-content: center;
  background: #000;
  border-radius: 50%;
}

.profile-pic {
  width: 30px;
  height: 30px;
  border-radius: 50%;
  background: #8d6e63;
  color: #eee;
  font-size: 15px;
  line-height: 30px;
  text-align: center;
}

.tool-menu {
  margin: 14px 0 0 26px;
}

/* page */
.page {
  flex: 1;
  min-height: 0;
  display: flex;
  overflow: hidden;
}

.main {
  flex: 0 0 1680px;
  padding: 100px 32px 0 339px;
}

.top {
  display: flex;
  justify-content: space-between;
}

.stats {
  margin: 16px 0 0 -339px;
  display: grid;
  grid-template-columns: 508px 1fr;
  grid-auto-rows: 38px;
  column-gap: 19px;
  align-items: center;
  font-size: 19px;
  color: #5c5b8f;
}

.stat-label {
  text-align: right;
}

.stat-value {
  display: flex;
  align-items: center;
  white-space: nowrap;
}

.stat-cur {
  margin-top: 6px;
}

.stat-cur .lbl {
  margin-right: 4px;
}

.plain {
  display: block;
  color: #45435f;
}

.lbl {
  margin-right: 5px;
}

.lbl-gap {
  margin-left: 18px;
}

.val,
.up,
.tile {
  font-family: "DejaVu Sans Mono", monospace;
  font-size: 15.300px;
  color: #1d1b2e;
}

.val-first {
  margin-left: 3px;
}

.val-goal {
  font-size: 15.500px;
}

.val-bold {
  font-weight: bold;
  font-size: 15px;
}

.up {
  color: #2a7f20;
}

.arrow {
  margin-right: 4px;
  font-family: "Liberation Sans", sans-serif;
  font-weight: normal;
  font-size: 18px;
}

.par {
  margin-left: 3px;
  color: #45435f;
}

.par + .up + .par {
  margin-left: 0;
}

.val + .lbl {
  margin-left: 8px;
}

.tile {
  width: 28px;
  height: 28px;
  margin-right: 2px;
  line-height: 26px;
  text-align: center;
  flex: none;
}

.tiles .tile {
  margin-right: 1.900px;
}

.t-good { background: #62d68a; }
.t-t { background: #9aa36a; }
.t-s { background: #84c17a; }
.t-u { background: #78ca80; }
.t-y { background: #93a96f; }
.t-c { background: #a99c5a; }
.t-b { background: #ab9455; }

.t-cur {
  outline: 1px solid #4d4a85;
  outline-offset: -1px;
}

.t-big {
  width: 30px;
  height: 30px;
  margin: 0 8px 0 -1px;
  line-height: 28px;
}

.t-off {
  background: linear-gradient(to bottom right, transparent calc(50% - 0.600px), #55535f 50%, transparent calc(50% + 0.600px)), #e9e3e3;
}

.smile {
  margin-left: 11px;
}

.goal-bar {
  margin-left: 20px;
  width: 591px;
  height: 14px;
  background: #fff;
}

.goal-inner {
  width: 585px;
  height: 14px;
  border: 1px solid #d8d4d4;
}

.tools {
  display: flex;
  gap: 8px;
  height: 30px;
  align-items: center;
  fill: #3d4a5f;
}

.tool-help {
  width: 27px;
  height: 28px;
}

.tool-undo {
  width: 30px;
  height: 14px;
}

.tool-box {
  width: 31px;
  height: 28px;
}

.tool-gear {
  width: 29px;
  height: 29px;
}

.lesson {
  margin-top: 53px;
  font-family: "DejaVu Sans Mono", monospace;
  font-size: 33px;
  letter-spacing: -1.140px;
  line-height: 45px;
  color: #2a2744;
}

.lesson-line {
  position: relative;
  white-space: nowrap;
}

/* the open box glyph is too tall in this font, squash it down to the baseline */
.lesson i {
  display: inline-block;
  font-style: normal;
  color: #8f8da3;
  transform-origin: 50% 40.500px;
  transform: translateY(-6px) scaleY(0.35);
}

.caret {
  position: absolute;
  left: -3px;
  top: 0;
  width: 3px;
  height: 44px;
  background: #2a2744;
}

.keyboard {
  --u: 52.660px;
  position: relative;
  margin: 74px 0 0 243px;
  width: 826px;
  height: 300px;
  padding: 19.500px 0 0 19.700px;
  background: #e9e2e2;
  border-radius: 14px;
}

.kb-row {
  display: flex;
  gap: 3px;
  margin-bottom: 3px;
}

.key {
  width: calc(var(--u) - 3px);
  height: 49.660px;
  flex: none;
  color: #2a2744;
}

.w15 { width: calc(var(--u) * 1.5 - 3px); }
.w175 { width: calc(var(--u) * 1.75 - 3px); }
.w2 { width: calc(var(--u) * 2 - 3px); }
.w225 { width: calc(var(--u) * 2.25 - 3px); }
.w275 { width: calc(var(--u) * 2.75 - 3px); }
.w9 { width: calc(var(--u) * 9 - 3px); }

.green { background: #8fc07a; }
.olive { background: #b7bb22; }
.yellow { background: #fdbc2a; }
.teal { background: #83a697; }
.pink { background: #d1809a; }
.space { background: #d86150; }

.letter {
  padding: 0 0 0 6px;
  font-size: 20px;
  line-height: 30px;
}

.sym {
  display: flex;
  flex-direction: column;
  align-items: flex-start;
  padding-top: 5px;
  font-size: 14px;
  line-height: 20px;
}

.sym span {
  width: 26px;
  text-align: center;
}

.label {
  display: flex;
  align-items: center;
  padding-left: 13px;
  padding-top: 1px;
  font-size: 13.700px;
}

.kb-overlay {
  position: absolute;
  left: 0;
  top: 0;
  pointer-events: none;
}

.wedge {
  fill: #5a66c0;
  fill-opacity: 0.62;
}

.wedge-red {
  fill: #e23a26;
  fill-opacity: 0.55;
}

.curve,
.curve-soft,
.curve-faint {
  fill: none;
  stroke-linecap: round;
}

.curve {
  stroke: #5a66c0;
  stroke-width: 3;
  stroke-opacity: 0.55;
}

.curve-thin {
  stroke-width: 2.500;
  stroke-opacity: 0.42;
}

.curve-soft {
  stroke: #5a66c0;
  stroke-width: 2.500;
  stroke-opacity: 0.2;
}

.curve-faint {
  stroke: #a89a70;
  stroke-width: 2.500;
  stroke-opacity: 0.26;
}

.ring {
  fill: none;
  stroke: #5ab0e0;
  stroke-width: 5;
  stroke-opacity: 0.72;
}

.home-dot {
  fill: #232142;
}

/* right column */
.sidebar {
  flex: 0 0 222px;
  padding: 95px 24px 0 11px;
  color: #45435f;
}

.avatar {
  width: 74px;
  height: 74px;
  margin: 0 auto;
  border-radius: 50%;
  background: #8d6e63;
  color: #fff;
  font-size: 40px;
  line-height: 74px;
  text-align: center;
}

.user-name {
  margin-top: 3px;
  height: 45px;
  line-height: 30px;
  font-size: 18.500px;
  text-align: center;
  border-bottom: 1px solid #e4dfdf;
  padding-right: 6px;
  color: #2a2744;
}

.side-tools {
  height: 57px;
  display: flex;
  align-items: center;
  justify-content: center;
  gap: 10px;
  padding-top: 4px;
}

.side-aa {
  width: 28px;
  display: flex;
  color: #3d4a5f;
  line-height: 1;
}

.aa-bold {
  margin-top: -4px;
  font-family: "DejaVu Sans Mono", monospace;
  font-size: 24px;
  font-weight: bold;
}

.aa-italic {
  margin-top: 4px;
  margin-left: -1px;
  font-family: "Liberation Serif", serif;
  font-style: italic;
  font-size: 24px;
}

.side-nav {
  border-top: 1px solid #e4dfdf;
}

.side-link {
  height: 38.500px;
  display: flex;
  align-items: center;
  gap: 9px;
  padding-left: 20px;
  font-size: 18.700px;
  color: #2a2744;
  fill: #4a4860;
  border-bottom: 1px solid #e4dfdf;
}

.side-link-on {
  background: #f9f9f9;
}

.side-links {
  margin-top: 18px;
  text-align: center;
  font-size: 14px;
  line-height: 21.150px;
}

.side-links a {
  display: block;
}

.scrollbar {
  flex: 0 0 18px;
  padding-top: 8px;
  display: flex;
  flex-direction: column;
}

.scroll-up {
  width: 0;
  margin-left: -1px;
  border: solid transparent;
  border-width: 0 7.500px 8px;
  border-bottom-color: #2a2744;
}

.scroll-thumb {
  width: 13px;
  height: 695px;
  margin-top: 113px;
  background: #2a2744;
  border-radius: 7px;
}

.scroll-down {
  width: 0;
  margin: 50px 0 0 -1px;
  border: solid transparent;
  border-width: 8px 7.500px 0;
  border-top-color: #2a2744;
}

/* taskbar */
.taskbar {
  height: 60px;
  flex: none;
  display: flex;
  align-items: center;
  color: #111;
  background: linear-gradient(to right, #d4d3d4 0, #d4d3d4 503px, #eddcd3 504px, #eddcd3 658px, #d7d4d2 733px, #d7d4d2 1150px, #e9dcd8 1500px, #d6d6da 1750px);
}

.start {
  width: 74px;
  height: 60px;
  display: flex;
  align-items: center;
  justify-content: center;
}

.search {
  width: 429px;
  height: 56px;
  display: flex;
  align-items: center;
  gap: 16px;
  padding: 2px 0 0 16px;
  background: #fff;
  font-size: 21.400px;
  color: #222;
}

.task-app {
  height: 60px;
  display: flex;
  align-items: center;
  justify-content: center;
}

.task-copilot {
  width: 82px;
}

.task-folder {
  width: 74px;
}

.task-app-on {
  width: 73px;
  background: #f1efed;
  border-bottom: 3px solid #0078d4;
}

.chrome-h {
  font-size: 13px;
  font-weight: 700;
  fill: #e8e4e2;
  text-anchor: middle;
}

.task-gap {
  flex: 1;
}

.tray-icon {
  width: 35.500px;
  display: flex;
  justify-content: center;
}

.tray-wifi {
  padding-left: 4px;
}

.tray-lang {
  width: 42px;
  margin-left: 5px;
  margin-right: -5px;
  text-align: center;
  font-size: 17px;
}

.tray-clock {
  width: 140px;
  text-align: center;
  font-size: 16.500px;
  line-height: 27px;
}

.tray-date {
  letter-spacing: 0.700px;
}

.tray-notify {
  width: 59px;
  padding-left: 2px;
}

.notify-num {
  font-size: 17px;
  font-weight: 700;
  fill: #111;
  text-anchor: middle;
}

.show-desktop {
  width: 8px;
  height: 60px;
  border-left: 1px solid #aaa;
}
```
